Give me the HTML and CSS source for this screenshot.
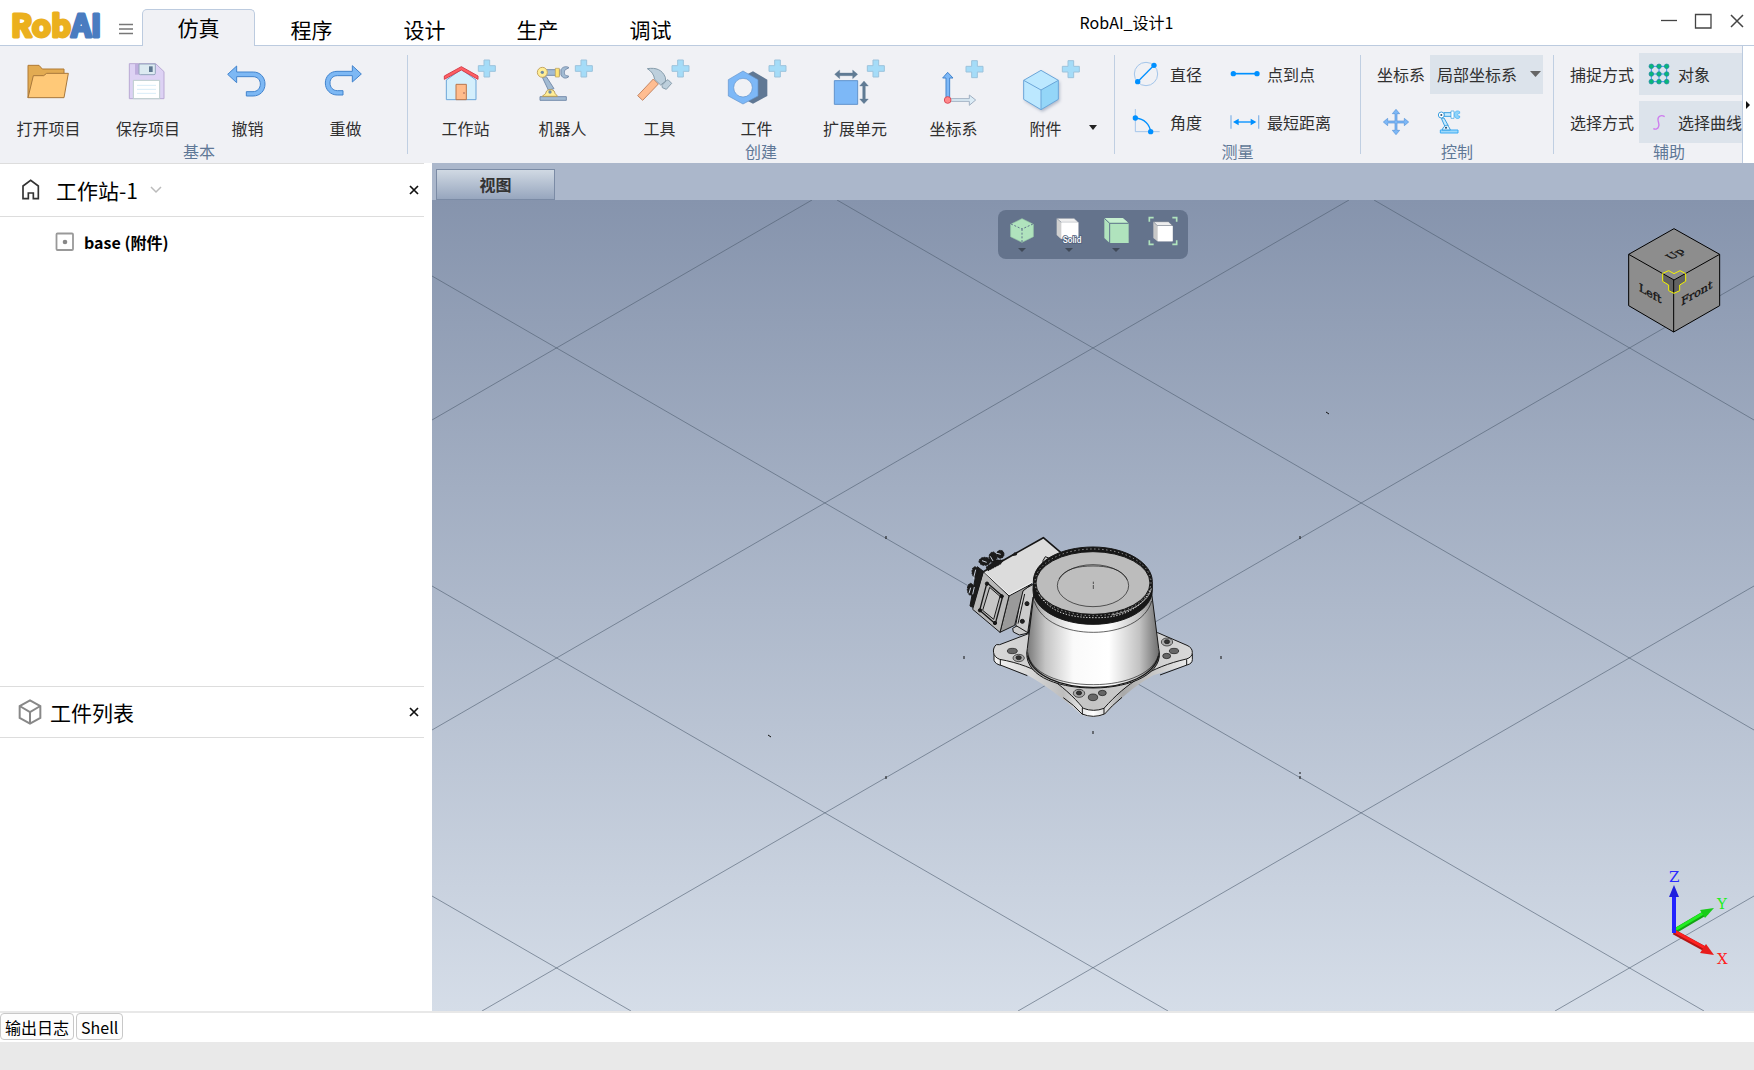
FILE: index.html
```html
<!DOCTYPE html>
<html lang="zh-CN">
<head>
<meta charset="utf-8">
<title>RobAI_设计1</title>
<meta name="viewport" content="width=device-width, initial-scale=1">
<link rel="stylesheet" href="styles.css">
</head>
<body>
<svg class="defs" width="0" height="0" aria-hidden="true">
  <defs>
    <path id="plus" d="M17 0h17v17h17v17H34v17H17V34H0V17h17z" fill="#a5dcf8" stroke="#9cc3dc" stroke-width="3"/>
    <linearGradient id="cone" x1="0" x2="1">
      <stop offset="0" stop-color="#777"/><stop offset=".14" stop-color="#c4c4c4"/><stop offset=".35" stop-color="#fafafa"/>
      <stop offset=".62" stop-color="#fff"/><stop offset=".85" stop-color="#c2c2c2"/><stop offset="1" stop-color="#6c6c6c"/>
    </linearGradient>
    <linearGradient id="plate" x1="0" x2="1">
      <stop offset="0" stop-color="#d8d8d8"/><stop offset=".5" stop-color="#c4c4c4"/><stop offset="1" stop-color="#d8d8d8"/>
    </linearGradient>
    <linearGradient id="rim" x1="0" x2="1">
      <stop offset="0" stop-color="#f4f4f4"/><stop offset=".35" stop-color="#bdbdbd"/><stop offset=".5" stop-color="#fff"/>
      <stop offset=".65" stop-color="#a8a8a8"/><stop offset="1" stop-color="#eee"/>
    </linearGradient>
  </defs>
</svg>

<header class="titlebar">
  <svg class="logo" width="92" height="36" viewBox="0 0 92 36" role="img" aria-label="RobAI">
    <text x="0" y="29" class="logo-text"><tspan class="logo-rob">Rob</tspan><tspan class="logo-ai">AI</tspan></text>
  </svg>
  <button class="menu" aria-label="菜单"><svg width="16" height="12"><path d="M1 1.500h14M1 6h14M1 10.500h14" stroke="#777" stroke-width="1.300"/></svg></button>
  <nav class="tabs">
    <button class="tab active">仿真</button>
    <button class="tab">程序</button>
    <button class="tab">设计</button>
    <button class="tab">生产</button>
    <button class="tab">调试</button>
  </nav>
  <h1 class="title">RobAI_设计1</h1>
  <div class="window-buttons">
    <button aria-label="最小化"><svg width="18" height="18"><path d="M1 8.500h16" stroke="#444" stroke-width="1.300"/></svg></button>
    <button aria-label="最大化"><svg width="18" height="18"><path d="M1.500 2.500h15.500v13.500H1.500z" fill="none" stroke="#444" stroke-width="1.300"/></svg></button>
    <button aria-label="关闭"><svg width="18" height="18"><path d="M3 3l12 12M15 3L3 15" stroke="#444" stroke-width="1.500"/></svg></button>
  </div>
</header>

<div class="ribbon">
  <div class="groups">
    <section class="group basic">
      <div class="tools">
        <button class="tool"><svg class="big" viewBox="55 165 180 162"><path d="M82 293V196h33l10 11h65v22l-70 0z" fill="#e2ab52" stroke="#b07a35" stroke-width="3"/><path d="M82 293l16-66h31l9-7h65l-13 73z" fill="#ffc978" stroke="#a8783c" stroke-width="3"/></svg><span>打开项目</span></button>
        <button class="tool wide"><svg class="big" viewBox="354 165 180 162"><path d="M388 191h79l25 24v81H388z" fill="#ddd2f4" stroke="#b9a9d4" stroke-width="3"/><path d="M405 192h12v32h-12z" fill="#bfaede"/><path d="M417 192h49v28q0 4-4 4h-41q-4 0-4-4z" fill="#dceaf1" stroke="#94a5bd" stroke-width="3"/><path d="M447 199h11v17h-11z" fill="#5d7790"/><path d="M400 241h79v55h-79z" fill="#fff" stroke="#bcc" stroke-width="3"/><path d="M411 256h57M411 268h57M411 280h57" stroke="#d8ecf8" stroke-width="3"/></svg><span>保存项目</span></button>
        <button class="tool"><svg class="big" viewBox="652 165 180 162"><path d="M681 223l27-25v18h50c20 0 35 15 35 36s-15 36-36 36h-20v-13h20c13 0 22-10 22-23s-9-22-22-22h-49v18z" fill="#7db8f4" stroke="#4384cd" stroke-width="3"/></svg><span>撤销</span></button>
        <button class="tool"><svg class="big" viewBox="946 165 180 162"><path d="M1082 222l-27-25v17h-46c-20 0-35 15-35 35s15 36 36 36h17v-13h-17c-13 0-22-10-22-23s9-22 22-22h45v19z" fill="#7db8f4" stroke="#4384cd" stroke-width="3"/></svg><span>重做</span></button>
      </div>
      <h2>基本</h2>
    </section>
    <i class="sep"></i>
    <section class="group create">
      <div class="tools">
        <button class="tool"><svg class="big" viewBox="108 165 180 162"><path d="M139 240l45-32 44 32v59h-89z" fill="#d4effc" stroke="#6ba5d8" stroke-width="3"/><path d="M168 253h31v46h-31z" fill="#ffbc8c" stroke="#b8764c" stroke-width="3"/><circle cx="192" cy="279" r="2" fill="#844"/><path d="M133 238v-10l51-28 50 28v10l-50-28z" fill="#ff5f63" stroke="#d53f4c" stroke-width="3"/><use href="#plus" x="235" y="180"/></svg><span>工作站</span></button>
        <button class="tool"><svg class="big" viewBox="400 165 180 162"><path d="M436 209h44v17h-44zM428 232l12-2 23 36-17 4z" fill="#a2bbd3" stroke="#788eac" stroke-width="3"/><path d="M421 290h79v11h-79z" fill="#a2bbd3" stroke="#788eac" stroke-width="3"/><path d="M428 289c4-6 10-5 11-12 1-10 24-12 26 0 1 6 6 6 8 12z" fill="#ffed95" stroke="#b69b57" stroke-width="3"/><circle cx="451" cy="276" r="5" fill="#708ca3"/><circle cx="428" cy="217" r="15" fill="#ffed95" stroke="#c5a662" stroke-width="3"/><circle cx="428" cy="217" r="5" fill="#708ca3"/><path d="M467 205h12v26h-12z" fill="#ffe476" stroke="#b69b57" stroke-width="2"/><path d="M508 203c-9-6-20-2-24 6v15c4 12 17 13 24 5l-7-2c-9 0-9-19 0-20z" fill="#a2bbd3" stroke="#788eac" stroke-width="3"/><use href="#plus" x="527" y="180"/></svg><span>机器人</span></button>
        <button class="tool"><svg class="big" viewBox="691 165 180 162"><path d="M714 287l47-50 15 15-47 49z" fill="#ffbd91" stroke="#c48664" stroke-width="3"/><path d="M743 206c26-4 45 3 54 26l1 11-15 12-18-17c-2-14-10-25-22-32zM787 256l13-14 5-3 11 11-16 18-12-5z" fill="#bdcfdc" stroke="#879dac" stroke-width="3"/><use href="#plus" x="817" y="180"/></svg><span>工具</span></button>
        <button class="tool"><svg class="big" viewBox="982 165 180 162"><path d="M1060 214l43 25v49l-43 23-23-12V226z" fill="#607894"/><path d="M1030 213l45 26v49l-45 24-44-24v-49z" fill="#7db8f7" stroke="#6193cc" stroke-width="2"/><circle cx="1030" cy="263" r="28" fill="#f0f1f5" stroke="#6193cc" stroke-width="2"/><use href="#plus" x="1108" y="180"/></svg><span>工件</span></button>
        <button class="tool wide"><svg class="big" viewBox="1278 165 180 162"><path d="M1306 242h70v71h-70z" fill="#7db8f7" stroke="#6193cc" stroke-width="3"/><path d="M1307 223l15-13v9h39v-9l15 13-15 13v-9h-39v9zM1395 243l13 15h-9v39h9l-13 14-13-14h9v-39h-9z" fill="#607b94" stroke="#607b94" stroke-width="1"/><use href="#plus" x="1405" y="180"/></svg><span>扩展单元</span></button>
        <button class="tool"><svg class="big" viewBox="133 165 180 162"><path d="M210 296h59v-11l19 15-19 16v-12h-59z" fill="#dcecf6" stroke="#a0b0c2" stroke-width="3"/><path d="M199 292v-58h-10l15-17 16 17h-10v58z" fill="#7db8f7" stroke="#4384cd" stroke-width="3"/><circle cx="204" cy="300" r="10" fill="#ff888b" stroke="#dc4d59" stroke-width="3"/><use href="#plus" x="259" y="182"/></svg><span>坐标系</span></button>
        <button class="tool last"><svg class="big cube" viewBox="411 165 180 162"><path d="M486 211l52 30v57l-52 31-52-31v-57z" fill="#bce8ff"/><path d="M486 270l52-29v57l-52 31z" fill="#94d6f8"/><path d="M486 211l52 30v57l-52 31-52-31v-57zM434 241l52 29 52-29M486 270v59" fill="none" stroke="#6ba5d8" stroke-width="3"/><use href="#plus" x="550" y="182"/></svg><span>附件</span></button>
        <button class="drop" aria-label="更多附件"><svg width="8" height="5"><path d="M0 0h8L4 5z" fill="#222"/></svg></button>
      </div>
      <h2>创建</h2>
    </section>
    <i class="sep"></i>
    <section class="group measure">
      <div class="rows">
        <button class="small"><svg width="28" height="28" viewBox="762 180 84 84"><circle cx="804" cy="222" r="35" fill="none" stroke="#a3c5ea" stroke-width="3"/><path d="M779 245l49-49" stroke="#0090ff" stroke-width="4"/><circle cx="779" cy="245" r="8" fill="#0090ff"/><circle cx="828" cy="196" r="8" fill="#0090ff"/></svg><span>直径</span></button>
        <button class="small"><svg width="30" height="28" viewBox="1049 180 90 84"><path d="M1059 221h70" stroke="#0090ff" stroke-width="5"/><circle cx="1059" cy="221" r="8" fill="#0090ff"/><circle cx="1130" cy="221" r="8" fill="#0090ff"/></svg><span>点到点</span></button>
        <button class="small"><svg width="28" height="28" viewBox="762 324 84 84"><path d="M772 327v68h73" fill="none" stroke="#a3c5ea" stroke-width="3"/><path d="M772 354c28 2 43 20 46 41" fill="none" stroke="#0090ff" stroke-width="4"/><circle cx="772" cy="354" r="8" fill="#0090ff"/><circle cx="818" cy="395" r="8" fill="#0090ff"/></svg><span>角度</span></button>
        <button class="small"><svg width="30" height="28" viewBox="1049 324 90 84"><path d="M1052 346v40M1135 346v40" stroke="#8db9e8" stroke-width="4"/><path d="M1065 366h58" stroke="#0090ff" stroke-width="4"/><path d="M1058 366l17-10v20zM1128 366l-17-10v20z" fill="#0090ff"/></svg><span>最短距离</span></button>
      </div>
      <h2>测量</h2>
    </section>
    <i class="sep"></i>
    <section class="group control">
      <div class="rows">
        <div class="field"><label for="cs">坐标系</label><span class="combo"><select id="cs"><option>局部坐标系</option></select><svg width="11" height="7"><path d="M0 0h11L5.500 6z" fill="#666"/></svg></span></div>
        <div class="pair">
          <button class="icon-button" aria-label="移动"><svg width="26" height="26" viewBox="207 327 78 78"><path d="M246 328l11 13h-8v22h22v-8l13 11-13 11v-8h-22v22h8l-11 13-11-13h8v-22h-22v8l-13-11 13-11v8h22v-22h-8z" fill="#7db8f7" stroke="#5593d8" stroke-width="2"/></svg></button>
          <button class="icon-button" aria-label="机器人控制"><svg width="26" height="26" viewBox="366 328 78 78"><path d="M390 339h22v11h-22zM382 356l8-1 13 23-10 3z" fill="#c4eaff" stroke="#3b9fe0" stroke-width="3"/><path d="M379 391h53v9h-53z" fill="#9fd9fa" stroke="#3aabf5" stroke-width="3"/><path d="M384 391c9-19 18-19 25 0z" fill="#dff4ff" stroke="#3b9fe0" stroke-width="3"/><circle cx="396" cy="384" r="3" fill="#246"/><circle cx="382" cy="346" r="9" fill="#fff" stroke="#3b9fe0" stroke-width="3"/><circle cx="382" cy="346" r="3" fill="#357"/><path d="M411 334h9v22h-9z" fill="#fff" stroke="#3b9fe0" stroke-width="2"/><path d="M437 336c-7-5-16-1-16 9s9 15 16 9v-5c-8 1-8-8 0-8z" fill="#8fd4fa" stroke="#3aabf5" stroke-width="2"/></svg></button>
        </div>
      </div>
      <h2>控制</h2>
    </section>
    <i class="sep"></i>
    <section class="group assist">
      <div class="rows">
        <div class="field"><span>捕捉方式</span><button class="mode"><svg width="24" height="24" viewBox="999 186 72 72"><path d="M1012 199h46v46h-46zM1012 222h46M1035 199v46" fill="none" stroke="#3498f0" stroke-width="3"/><g fill="#08b877" stroke="#2080a8" stroke-width="2"><circle cx="1012" cy="199" r="7"/><circle cx="1035" cy="199" r="7"/><circle cx="1058" cy="199" r="7"/><circle cx="1012" cy="222" r="7"/><circle cx="1035" cy="222" r="7"/><circle cx="1058" cy="222" r="7"/><circle cx="1012" cy="245" r="7"/><circle cx="1035" cy="245" r="7"/><circle cx="1058" cy="245" r="7"/></g></svg><span>对象</span></button></div>
        <div class="field"><span>选择方式</span><button class="mode"><svg width="24" height="24" viewBox="999 330 72 72"><path d="M1052 350c-10-6-21-2-20 9 0 8 5 13 2 20-2 8-9 10-16 7" fill="none" stroke="#ce7bee" stroke-width="4"/></svg><span>选择曲线</span></button></div>
      </div>
      <h2>辅助</h2>
    </section>
  </div>
  <button class="scroll-right" aria-label="向右滚动"><svg width="4" height="8"><path d="M0 0v8l4-4z" fill="#111"/></svg></button>
</div>

<main class="workspace">
  <aside class="side">
    <section class="panel">
      <header>
        <svg class="home" width="18" height="20" viewBox="67 544 54 60"><path d="M70 562l23-17 23 17v38H101V583H86v17H70z" fill="none" stroke="#333" stroke-width="5"/></svg>
        <h2>工作站-1</h2>
        <svg width="12" height="8"><path d="M1 1l5 5 5-5" fill="none" stroke="#bbb" stroke-width="1.500"/></svg>
        <button class="close" aria-label="关闭工作站"><svg width="10" height="10"><path d="M1 1l8 8M9 1L1 9" stroke="#111" stroke-width="1.700"/></svg></button>
      </header>
      <ul class="tree">
        <li><svg width="20" height="20"><rect x="1.500" y="1.500" width="16.500" height="16.500" rx="1" fill="none" stroke="#999" stroke-width="1.800"/><circle cx="10" cy="10" r="2.300" fill="#888"/></svg>base (附件)</li>
      </ul>
    </section>
    <section class="panel parts">
      <header>
        <svg width="24" height="26" viewBox="55 121 72 78"><path d="M91 125l31 17v36l-31 17-31-17v-36zM60 142l31 18 31-18M91 160v35" fill="none" stroke="#888" stroke-width="6"/></svg>
        <h2>工件列表</h2>
        <button class="close" aria-label="关闭工件列表"><svg width="10" height="10"><path d="M1 1l8 8M9 1L1 9" stroke="#111" stroke-width="1.700"/></svg></button>
      </header>
    </section>
  </aside>

  <section class="view">
    <div class="view-tabs"><button class="view-tab">视图</button></div>
    <div class="scene">
      <svg class="world" viewBox="0 0 1322 811" preserveAspectRatio="xMidYMid slice" role="img" aria-label="机器人底座">
        <g stroke="#4f5d70" stroke-opacity=".6" stroke-width="1">
          <path d="M942 0L1322 220M405 0L1322 530M0 76L1272 811M0 386L736 811M0 696L199 811"/>
          <path d="M380 0L0 220M917 0L0 530M1322 76L50 811M1322 386L586 811M1322 696L1123 811"/>
        </g>
        <path d="M454 336v3M868 336v3M894 212l3 2M336 535l3 2M454 576v3M868 572v2M868 576v3M532 456v3M789 456v3M661 531v3" stroke="#111" stroke-width="1"/>
        <g class="model" transform="translate(508 320) scale(.333333)" stroke="#161616" stroke-width="3" stroke-linejoin="round">
          <path d="M162 401v20q4 12 24 16l76 28c50 28 108 70 163 119q34 13 68 0c45-45 88-85 147-118l101-31q16-4 16-18v-20l-100-20H262z" fill="url(#rim)" stroke="none"/>
          <path d="M162 401v20q4 12 24 16l76 30M757 401v18q0 12-16 16l-81 30M370 533q32 22 56 49 34 14 68 0 20-24 52-50M181 418v17M740 418v17M427 563v20M492 560v22" fill="none"/>
          <path d="M179 374l84-32 390-4 88 38q16 7 16 21 0 15-18 20c-105 24-180 72-247 148q-31 12-62 0c-62-74-138-127-251-147-23-8-23-34-10-44z" fill="url(#plate)"/>
          <g fill="#666" stroke-width="2"><ellipse cx="217" cy="393" rx="15" ry="8"/><ellipse cx="236" cy="414" rx="17" ry="11" fill="#aaa"/><ellipse cx="236" cy="413" rx="8" ry="6" fill="#333"/><ellipse cx="681" cy="366" rx="17" ry="12" fill="#aaa"/><ellipse cx="681" cy="365" rx="8" ry="6" fill="#333"/><ellipse cx="702" cy="393" rx="14" ry="8"/><ellipse cx="680" cy="408" rx="12" ry="8"/><ellipse cx="417" cy="520" rx="17" ry="12" fill="#aaa"/><ellipse cx="417" cy="519" rx="8" ry="6" fill="#333"/><ellipse cx="459" cy="532" rx="14" ry="10"/><ellipse cx="487" cy="519" rx="12" ry="8"/></g>
          <path d="M218 325l14-8 30 8 4 14-28 6-18-9z" fill="#ccc"/>
          <path d="M247 211l33-18 5 20-20 126-38-23z" fill="#cbcbcb"/>
          <path d="M279 231l-16 108M254 222l-20 89" fill="none"/>
          <circle cx="261" cy="251" r="6" fill="#222"/><circle cx="247" cy="304" r="6" fill="#222"/>
          <path d="M130 155L310 53l52 44-75 87-80 44z" fill="#dcdcdc" stroke="none"/>
          <path d="M207 228l69-37-27 22-25 103-44 21z" fill="#9a9a9a"/>
          <path d="M130 155l77 73-27 109-82-69z" fill="#b9b9b9"/>
          <path d="M130 155L310 53l52 44" fill="none" stroke-width="5"/><path d="M134 157l73 67 72-38" fill="none" stroke="#fff" stroke-width="2"/>
          <path d="M141 188l47 41-22 82-47-40z" fill="#b9b9b9" stroke-width="4"/><path d="M149 202l31 27-19 69-33-27z" fill="#c6c6c6" stroke-width="3"/>
          <g fill="#161616"><circle cx="141" cy="191" r="5"/><circle cx="185" cy="229" r="5"/><circle cx="120" cy="271" r="5"/><circle cx="165" cy="309" r="5"/></g>
          <path d="M112 140l18 14-32 108-8-4z" fill="#1b1b1b"/>
          <g fill="#1b1b1b" stroke-dasharray="5 3"><ellipse cx="105" cy="156" rx="9" ry="16"/><ellipse cx="92" cy="208" rx="10" ry="18"/><ellipse cx="134" cy="124" rx="17" ry="12"/><ellipse cx="159" cy="112" rx="12" ry="16"/><ellipse cx="181" cy="103" rx="11" ry="12"/><path d="M138 142l30-22 22 0-8 12-38 20zM216 106l8-8 8 0-4 8z"/></g>
          <path d="M107 149l-7 28M126 122l14 5M151 109l8 14M168 99l14 4M92 203l-5 17M103 201l-5 22" fill="none" stroke="#c8d0dc" stroke-width="3"/>
          <path d="M309 122l7-12 12 5v18h-19z" fill="#ccc"/>
          <path d="M282 220L262 385c-16 77 80 119 197 119s216-46 197-119L635 220z" fill="url(#cone)"/>
          <path d="M263 397c8 63 95 97 197 97s188-37 197-97" fill="none" stroke-width="2"/>
          <path d="M263 407c15 61 100 95 197 95s182-35 196-95" fill="none" stroke-width="4"/>
          <path d="M283 244c20 62 96 93 177 93s158-33 175-94" fill="none" stroke-width="2"/>
          <path d="M280 185c0-60 80-104 179-104s178 48 178 104v25c0 57-79 103-178 103S279 266 279 210z" fill="#171717"/>
          <ellipse cx="459" cy="189" rx="171" ry="94" fill="#bcbcbc"/>
          <ellipse cx="459" cy="187" rx="174" ry="100" fill="none" stroke="#ddd" stroke-width="2" stroke-dasharray="4 8"/>
          <path d="M298 226c38 55 98 68 178 67s133-34 157-86" fill="none" stroke="#ddd" stroke-width="3" stroke-dasharray="4 5"/>
          <path d="M634 205c-8 40-58 69-120 80" fill="none" stroke="#eee" stroke-width="2"/>
          <ellipse cx="459" cy="197" rx="107" ry="63" fill="#bebebe" stroke-width="2"/>
          <path d="M357 177c16-31 59-39 102-39s86 8 103 41" fill="none" stroke-width="2"/>
          <path d="M460 185v7M460 195v12" stroke-width="2"/>
        </g>
      </svg>

      <div class="view-tools">
        <button aria-label="视角"><svg width="26" height="26" viewBox="387 651 78 78"><path d="M426 656l34 17v37l-34 17-34-17v-37z" fill="#b0e3bd" stroke="#9ccfab" stroke-width="2"/><path d="M393 672l33 15 33-15M426 687v39" fill="none" stroke="#60748c" stroke-width="3" stroke-dasharray="6 5"/></svg><i></i></button>
        <button aria-label="显示模式"><svg width="26" height="26" viewBox="529 651 78 78"><path d="M531 656h52l13 11v49h-53l-12-11z" fill="#d0d0d0"/><path d="M531 655h52l13 12h-51z" fill="#eee" stroke="#7d8796" stroke-width="2"/><path d="M545 667h51v49h-51z" fill="#fff"/><text x="549" y="728" class="solid">Solid</text></svg><i></i></button>
        <button aria-label="面显示"><svg width="26" height="26" viewBox="671 657 78 78"><path d="M675 661h56l17 15v59h-57l-16-15z" fill="#b0e3bd"/><path d="M675 661l16 15h57M691 676v59" fill="none" stroke="#60748c" stroke-width="3"/><path d="M677 660h53l15 13h-53z" fill="#c6efd0"/></svg><i></i></button>
        <button class="fit" aria-label="适应窗口"><svg width="30" height="28" viewBox="805 651 90 84"><path d="M809 665v-12h13M878 653h13v12M891 721v12h-13M822 733h-13v-12" fill="none" stroke="#b0e3bd" stroke-width="5"/><path d="M821 666h45l13 12v46h-46l-12-10z" fill="#c8c8c8"/><path d="M821 665h45l13 12h-46z" fill="#eee" stroke="#6c7788" stroke-width="2"/><path d="M834 678h45v46h-45z" fill="#fff"/></svg></button>
      </div>

      <svg class="view-cube" width="94" height="106" viewBox="942 683 282 318" role="img" aria-label="视图立方体">
        <path d="M1080 685l137 77v154l-138 79-135-79V762z" fill="#8d8d8d"/>
        <path d="M1046 821l34 18 35-18v23l-18 10v17l-17 7-17-7v-18l-17-9z" fill="#626262"/>
        <path d="M1080 685l137 77v154l-138 79-135-79V762zM944 762l136 77 137-77M1079 839v156" fill="none" stroke="#000" stroke-width="3"/>
        <path d="M1046 819l18-8 16 9 18-9 17 9v23l-18 11v17l-17 8-16-8v-17l-18-11z" fill="none" stroke="#f6f600" stroke-width="3"/>
        <text class="face" transform="translate(975 871) skewY(30)">Left</text>
        <text class="face" transform="translate(1102 916) skewY(-30)">Front</text>
        <text class="face" transform="matrix(.866 -.5 .866 .5 1072 779)">Up</text>
      </svg>

      <svg class="axes" width="66" height="108" viewBox="0 0 66 108" role="img" aria-label="坐标轴">
        <path d="M10 63L44 43" stroke="#14a314" stroke-width="5"/><path d="M10 62L44 42" stroke="#22ee22" stroke-width="3"/><path d="M51 39l-14 2 5 8z" fill="#19cc19"/>
        <path d="M11 63L44 81" stroke="#b31515" stroke-width="5"/><path d="M11 62L44 80" stroke="#ff2020" stroke-width="3"/><path d="M51 86l-14-2 6-9z" fill="#e81c1c"/>
        <path d="M11 64V24" stroke="#2424ff" stroke-width="4"/><path d="M11 16l5 12H6z" fill="#2020dd"/>
        <text x="6" y="13" fill="#2a2aff">Z</text><text x="54" y="40" fill="#20ee20">Y</text><text x="54" y="95" fill="#ff2020">X</text>
      </svg>
    </div>
  </section>
</main>

<footer>
  <div class="dock"><button>输出日志</button><button>Shell</button></div>
  <div class="status"></div>
</footer>
</body>
</html>
```
FILE: styles.css
```css
* { box-sizing: border-box; }

body {
  margin: 0;
  min-height: 100vh;
  display: flex;
  flex-direction: column;
  background: #fff;
  color: #000;
  font: 16px/24px "Noto Sans CJK SC", "Noto Sans", sans-serif;
  overflow-x: hidden;
}

button, select { font: inherit; color: inherit; margin: 0; padding: 0; border: 0; background: none; border-radius: 0; }
button { cursor: pointer; }
h1, h2 { margin: 0; font-weight: 400; }
svg { display: block; flex: none; overflow: visible; }
.defs { position: absolute; }

/* Title bar */
.titlebar { display: flex; height: 46px; border-bottom: 1px solid #bccbdf; }
.logo { margin: 8px 0 0 11px; }
.logo-text { font: bold 31px "Noto Sans CJK SC", sans-serif; stroke-width: 3px; stroke-linejoin: round; }
.logo-rob { fill: #ebb01e; stroke: #ebb01e; }
.logo-ai { fill: #4a7cc0; stroke: #4a7cc0; }
.menu { width: 39px; padding: 23px 0 0 15px; }
.menu svg { margin-bottom: 10px; }
.tabs { display: flex; padding-top: 9px; }
.tab { width: 113px; height: 37px; padding-top: 2px; font-size: 21px; line-height: 30px; }
.tab.active { padding: 0 0 2px; border: 1px solid #bccbdf; border-bottom: 0; border-radius: 5px 5px 0 0; background: #f0f1f5; }
.title { flex: 1; font-size: 16px; line-height: 44px; text-align: center; }
.window-buttons { display: flex; align-items: flex-start; gap: 16px; width: 208px; padding: 12px 8px 0 0; justify-content: flex-end; }

/* Ribbon */
.ribbon { display: flex; height: 117px; background: #f0f1f5; color: #303030; }
.groups { flex: 1; min-width: 0; display: flex; overflow-x: clip; white-space: nowrap; }
.group { flex: none; }
.group h2 { margin-top: -6px; font-size: 16px; line-height: 24px; text-align: center; color: #5f7897; }
.sep { flex: none; width: 1px; height: 99px; margin-top: 9px; background: #c0cfe2; }
.tools { display: flex; height: 99px; }
.basic { width: 398px; margin-right: 9px; }
.basic .tools { gap: 1px; }
.create { width: 706px; }
.create .tools { padding-left: 9px; }
.tool { width: 97px; padding-top: 9px; display: flex; flex-direction: column; align-items: center; gap: 7px; }
.tool.wide { width: 100px; }
.tool.last { width: 87px; }
.big { width: 60px; height: 54px; }
.cube path:first-child { filter: drop-shadow(4px 6px 4px #b0b8c8); }
.drop { width: 14px; padding-top: 79px; display: flex; align-items: flex-start; }

.rows { display: grid; grid-auto-rows: 46px; gap: 2px; height: 99px; padding-top: 5px; align-items: center; }
.measure { width: 245px; }
.measure .rows { grid-template-columns: 96px 120px; padding-left: 17px; }
.small { display: flex; align-items: center; gap: 10px; height: 42px; }
.small:nth-child(even) { gap: 7px; }
.control { width: 192px; padding-left: 16px; }
.control h2 { margin-left: -16px; }
.field { display: flex; align-items: center; gap: 5px; }
.combo { display: grid; align-items: center; width: 113px; background: #dce3eb; }
.combo select, .combo svg { grid-area: 1 / 1; }
.combo select { appearance: none; height: 39px; padding: 0 24px 0 7px; width: 100%; }
.combo svg { justify-self: end; margin-right: 2px; pointer-events: none; }
.pair { display: flex; gap: 27px; padding-left: 6px; }
.assist { width: 230px; }
.assist .rows { padding-left: 16px; }
.mode { flex: 1; display: flex; align-items: center; gap: 7px; height: 42px; padding-left: 8px; background: #dce3eb; }
.scroll-right { flex: none; width: 12px; padding-left: 3px; border-left: 1px solid #bccbdf; background: #fff; }

/* Side panels */
.workspace { flex: 1; display: flex; }
.side { flex: none; width: 432px; padding-right: 8px; display: grid; grid-template-rows: 523fr 325fr; }
.panel header { display: flex; align-items: center; height: 54px; padding: 0 5px 0 22px; border: solid #ddd; border-width: 1px 0; }
.panel h2 { margin: 0 12px 0 16px; font-size: 21px; line-height: 30px; }
.parts header { height: 52px; padding-left: 18px; }
.parts h2 { margin-left: 8px; }
.close { margin-left: auto; }
.tree { list-style: none; margin: 0; padding: 13px 0 0 55px; font-weight: 700; }
.tree li { display: flex; align-items: center; gap: 9px; }

/* 3D view */
.view { flex: 1; min-width: 0; display: flex; flex-direction: column; }
.view-tabs { height: 37px; padding: 6px 4px 0; background: #abb7cb; }
.view-tab { width: 119px; height: 31px; padding-bottom: 2px; border: 1px solid #7b8ba5; background: linear-gradient(#d0d9e3, #97a6be); color: #333; font-weight: 700; }
.scene { position: relative; flex: 1; min-height: 500px; background: linear-gradient(#8694ad, #d5dde8); overflow: hidden; }
.world { position: absolute; inset: 0; width: 100%; height: 100%; }
.view-tools { position: absolute; top: 10px; left: 50%; transform: translateX(-50%); display: flex; align-items: flex-start; gap: 21px; width: 190px; height: 49px; padding: 7px 10px 0 11px; border-radius: 8px; background: #64738c; }
.view-tools button { display: flex; flex-direction: column; align-items: center; gap: 5px; }
.view-tools .fit { margin-left: -2px; }
.view-tools i { border: 4px solid transparent; border-top-color: #404a59; border-bottom: 0; }
.solid { font: 500 25px Roboto, sans-serif; fill: #fff; stroke: #50617c; stroke-width: 5px; paint-order: stroke; }
.view-cube { position: absolute; top: 28px; right: 32px; }
.face { font: 33px "DejaVu Serif", serif; fill: #111; stroke: #111; stroke-width: 1px; }
.axes { position: absolute; right: 25px; bottom: 34px; }
.axes text { font: 15px "DejaVu Serif", serif; }

/* Bottom */
.dock { display: flex; gap: 2px; height: 31px; border-top: 2px solid #e8e8e8; }
.dock button { height: 27px; padding: 0 4px; border: 1px solid #c8c8c8; border-radius: 4px; background: #fdfdfd; }
.status { height: 28px; background: #e9e9e9; }
```
